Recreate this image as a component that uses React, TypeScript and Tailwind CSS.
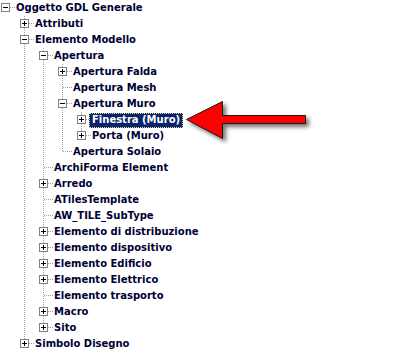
type Row = {
  label: string;
  level: number;
  box?: '+' | '-';
  last: boolean;
  // one flag per ancestor column: does its vertical line carry on
  guides: boolean[];
  selected?: boolean;
};

type Node = { label: string; box?: '+' | '-'; selected?: boolean; children?: Node[] };

const tree: Node = {
  label: 'Oggetto GDL Generale',
  box: '-',
  children: [
    { label: 'Attributi', box: '+' },
    {
      label: 'Elemento Modello',
      box: '-',
      children: [
        {
          label: 'Apertura',
          box: '-',
          children: [
            { label: 'Apertura Falda', box: '+' },
            { label: 'Apertura Mesh' },
            {
              label: 'Apertura Muro',
              box: '-',
              children: [
                { label: 'Finestra (Muro)', box: '+', selected: true },
                { label: 'Porta (Muro)', box: '+' },
              ],
            },
            { label: 'Apertura Solaio' },
          ],
        },
        { label: 'ArchiForma Element' },
        { label: 'Arredo', box: '+' },
        { label: 'ATilesTemplate' },
        { label: 'AW_TILE_SubType' },
        { label: 'Elemento di distribuzione', box: '+' },
        { label: 'Elemento dispositivo', box: '+' },
        { label: 'Elemento Edificio', box: '+' },
        { label: 'Elemento Elettrico', box: '+' },
        { label: 'Elemento trasporto' },
        { label: 'Macro', box: '+' },
        { label: 'Sito', box: '+' },
      ],
    },
    { label: 'Simbolo Disegno', box: '+' },
  ],
};

function flatten(node: Node, level: number, last: boolean, guides: boolean[], out: Row[]) {
  out.push({ label: node.label, level, box: node.box, last, guides, selected: node.selected });
  const kids = node.children ?? [];
  kids.forEach((k, i) => {
    const childGuides = level === 0 ? [] : [...guides, !last];
    flatten(k, level + 1, i === kids.length - 1, childGuides, out);
  });
}

const rows: Row[] = [];
flatten(tree, 0, true, [], rows);

const DOT = '#a0a0a0';

function Guide({ on }: { on: boolean }) {
  return (
    <svg width="19" height="16" className="block shrink-0">
      {on && <line x1="5.5" y1="0" x2="5.5" y2="16" stroke={DOT} strokeDasharray="1 1" />}
    </svg>
  );
}

function Connector({ row }: { row: Row }) {
  const isRoot = row.level === 0;
  return (
    <svg width="16" height="16" className="block shrink-0">
      {!isRoot && (
        <line x1="5.5" y1="0" x2="5.5" y2={row.last ? 8 : 16} stroke={DOT} strokeDasharray="1 1" />
      )}
      <line x1="6" y1="7.5" x2="15" y2="7.5" stroke={DOT} strokeDasharray="1 1" />
      {row.box && (
        <g>
          <rect x="1.5" y="3.5" width="8" height="8" fill="#ffffff" stroke="#808080" />
          <line x1="3" y1="7.5" x2="8" y2="7.5" stroke="#000000" />
          {row.box === '+' && <line x1="5.5" y1="5" x2="5.5" y2="10" stroke="#000000" />}
        </g>
      )}
    </svg>
  );
}

export default function App() {
  return (
    <div
      className="relative w-[398px] h-[355px] bg-white overflow-hidden"
      style={{ fontFamily: '"DejaVu Sans", Verdana, sans-serif' }}
    >
      <div className="flex flex-col">
        {rows.map((row, i) => (
          <div key={i} className="flex h-4 items-center">
            {row.level > 0 && <div className="w-[19px] shrink-0" />}
            {row.guides.map((g, j) => (
              <Guide key={j} on={g} />
            ))}
            <Connector row={row} />
            {row.selected ? (
              <span className="h-[15px] -ml-[3px] px-[2px] flex items-center text-[10px] font-bold leading-none text-white bg-[#0a246a] border border-dotted border-[#e8d89a]">
                {row.label}
              </span>
            ) : (
              <span className="text-[10px] font-bold leading-none text-[#000033]">{row.label}</span>
            )}
          </div>
        ))}
      </div>

      {/* red arrow pointing to the selected item */}
      <svg width="140" height="50" className="absolute left-[180px] top-[96px]">
        <defs>
          <filter id="sh" x="-20%" y="-30%" width="150%" height="170%">
            <feGaussianBlur in="SourceAlpha" stdDeviation="2" />
            <feOffset dx="3" dy="3" result="b" />
            <feComponentTransfer>
              <feFuncA type="linear" slope="0.55" />
            </feComponentTransfer>
            <feMerge>
              <feMergeNode />
              <feMergeNode in="SourceGraphic" />
            </feMerge>
          </filter>
        </defs>
        <polygon
          points="6.5,23.5 42.5,5.5 42.5,19.5 125.5,19.5 125.5,27.5 42.5,27.5 42.5,42.5"
          fill="#ff0000"
          stroke="#1a1a1a"
          strokeLinejoin="round"
          filter="url(#sh)"
        />
      </svg>
    </div>
  );
}
